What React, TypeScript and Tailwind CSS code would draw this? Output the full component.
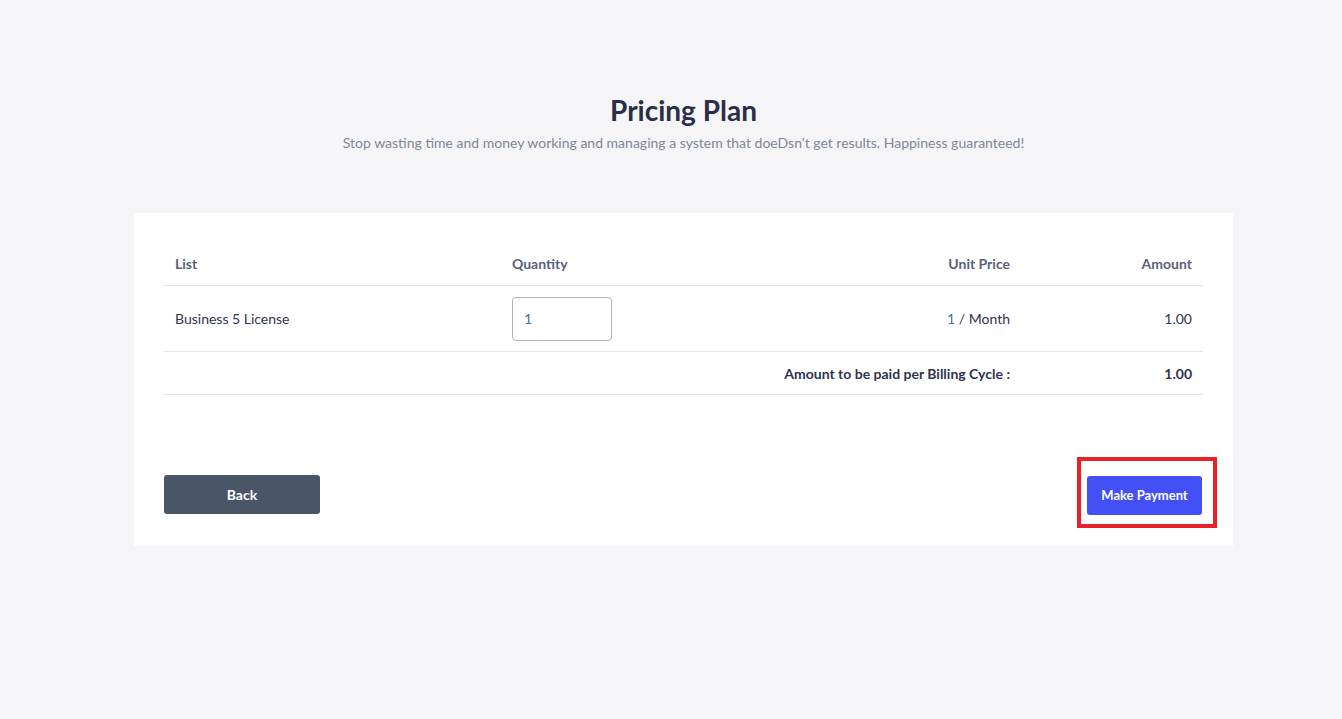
export default function App() {
  return (
    <div
      className="min-h-[719px] w-full bg-[#f5f5f7] pt-[90px]"
      style={{ fontFamily: 'Lato, "Noto Sans", sans-serif' }}
    >
      <div className="ml-[134px] w-[1099px]">
        <div className="text-center">
          <h1 className="text-[28px] font-bold leading-[40px] text-[#2b2e4a]">Pricing Plan</h1>
          <p className="mt-[4px] text-[14px] leading-[18px] text-[#7e8799]">
            Stop wasting time and money working and managing a system that doeDsn't get results. Happiness guaranteed!
          </p>
        </div>

        <div className="mt-[61px] bg-white px-[30px] pt-[40px] pb-[18px]">
          <table className="w-full table-fixed border-collapse text-[14px] text-[#2f3350]">
            <colgroup>
              <col className="w-[348px]" />
              <col className="w-[268px]" />
              <col />
              <col className="w-[193px]" />
            </colgroup>
            <thead>
              <tr className="border-b border-[#e4e6ea] text-[#5b5f7a]">
                <th className="h-[32px] pb-[11px] pl-[11px] text-left font-bold">List</th>
                <th className="pb-[11px] text-left font-bold">Quantity</th>
                <th className="pb-[11px] text-right font-bold">Unit Price</th>
                <th className="pb-[11px] pr-[11px] text-right font-bold">Amount</th>
              </tr>
            </thead>
            <tbody>
              <tr className="h-[66px] border-b border-[#e4e6ea]">
                <td className="pl-[11px]">Business 5 License</td>
                <td>
                  <input
                    defaultValue="1"
                    className="h-[44px] w-[100px] rounded-[4px] border border-[#aab5c0] px-[11px] text-[14px] text-[#3b6fa8] outline-none"
                  />
                </td>
                <td className="text-right">
                  <span className="text-[#3b6fa8]">1</span> / Month
                </td>
                <td className="pr-[11px] text-right">1.00</td>
              </tr>
              <tr className="h-[43px] border-b border-[#e4e6ea] font-bold">
                <td colSpan={3} className="text-right">Amount to be paid per Billing Cycle :</td>
                <td className="pr-[11px] text-right">1.00</td>
              </tr>
            </tbody>
          </table>

          <div className="mt-[62px] flex items-start justify-between">
            <button className="mt-[18px] h-[39px] w-[156px] rounded-[3px] bg-[#4a5568] text-[14px] font-bold text-white">
              Back
            </button>
            <div className="-mr-[14px] border-[4px] border-[#e8202a] pt-[15px] pb-[9px] pl-[6px] pr-[11px]">
              <button className="block h-[39px] w-[115px] rounded-[3px] bg-[#4350f5] text-[13px] font-bold text-white">
                Make Payment
              </button>
            </div>
          </div>
        </div>
      </div>
    </div>
  );
}
